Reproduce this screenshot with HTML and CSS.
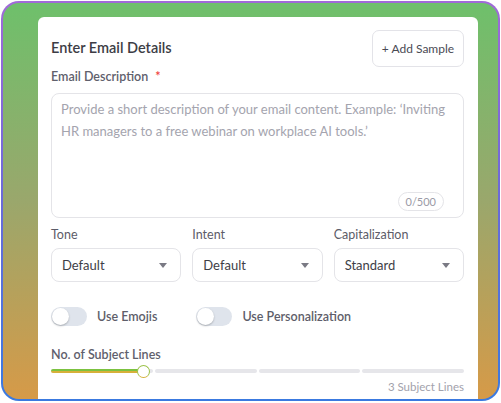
FILE: index.html
```html
<!DOCTYPE html>
<html>
<head>
<meta charset="utf-8">
<link rel="stylesheet" href="styles.css">
</head>
<body>
<div class="frame">
  <div class="card">
    <div class="head">
      <h1 class="title">Enter Email Details</h1>
      <button class="add-btn">+ Add Sample</button>
    </div>
    <div class="label">Email Description <span class="req">*</span></div>
    <div class="textarea">
      <div class="placeholder">Provide a short description of your email content. Example: ‘Inviting HR managers to a free webinar on workplace AI tools.’</div>
      <div class="counter">0/500</div>
    </div>
    <div class="selects">
      <div class="field">
        <div class="label small">Tone</div>
        <div class="select"><span>Default</span><span class="caret"></span></div>
      </div>
      <div class="field">
        <div class="label small">Intent</div>
        <div class="select"><span>Default</span><span class="caret"></span></div>
      </div>
      <div class="field">
        <div class="label small">Capitalization</div>
        <div class="select"><span>Standard</span><span class="caret"></span></div>
      </div>
    </div>
    <div class="toggles">
      <div class="toggle-item"><span class="track"><span class="thumb"></span></span><span class="tlabel">Use Emojis</span></div>
      <div class="toggle-item"><span class="track"><span class="thumb"></span></span><span class="tlabel">Use Personalization</span></div>
    </div>
    <div class="label">No. of Subject Lines</div>
    <div class="slider">
      <div class="seg"></div><div class="seg"></div><div class="seg"></div><div class="seg"></div>
      <div class="fill"></div>
      <div class="knob"></div>
    </div>
    <div class="slider-note">3 Subject Lines</div>
  </div>
</div>
</body>
</html>
```
FILE: styles.css
```css
* { box-sizing: border-box; }
html, body { margin: 0; padding: 0; background: #ffffff; }
body { font-family: "Lato", "Inter", sans-serif; }
.frame {
  margin: 1px 0 0 1px;
  width: 499px;
  height: 400px;
  border: 2px solid transparent;
  border-radius: 18px;
  background:
    linear-gradient(180deg, #6ec06b 0%, #9aa76c 50%, #d69a48 100%) padding-box,
    linear-gradient(180deg, #a06ad8 0%, #6a6ad8 50%, #3a7ae0 100%) border-box;
  padding: 14px 20px 0 35px;
  overflow: hidden;
}
.card {
  background: #ffffff;
  border-radius: 6px 6px 0 0;
  height: 420px;
  padding: 12px 14px 0 13px;
}
.head { display: flex; justify-content: space-between; align-items: flex-start; }
.title {
  margin: 10px 0 0 0;
  font-size: 14.5px;
  font-weight: 600;
  color: #3d3d45;
  line-height: 18px;
}
.add-btn {
  margin: 1px 0 0 0;
  width: 92px;
  height: 37px;
  border: 1px solid #e3e3e8;
  border-radius: 7px;
  background: #fff;
  font-family: inherit;
  font-size: 12px;
  color: #4a4a54;
  padding: 0;
}
.label {
  font-size: 12.5px;
  font-weight: 600;
  color: #60606c;
  line-height: 16px;
  margin-top: 2px;
}
.req { color: #ef3b3b; margin-left: 4px; }
.textarea {
  margin-top: 8px;
  height: 125px;
  border: 1px solid #e4e4e8;
  border-radius: 8px;
  padding: 4px 10px 0 9px;
  display: flex;
  flex-direction: column;
  justify-content: space-between;
}
.placeholder {
  font-size: 13px;
  color: #a4a4ae;
  line-height: 22px;
}
.counter {
  align-self: flex-end;
  margin: 0 9px 6px 0;
  border: 1px solid #e4e4e8;
  border-radius: 10px;
  font-size: 11px;
  color: #9a9aa6;
  padding: 2px 7px;
  line-height: 13px;
}
.selects {
  display: grid;
  grid-template-columns: repeat(3, 1fr);
  gap: 11px;
  margin-top: 9px;
}
.label.small { font-weight: 400; color: #5c5c68; font-size: 12.5px; margin-top: 0; }
.select {
  margin-top: 5px;
  height: 34px;
  border: 1px solid #e4e4e8;
  border-radius: 8px;
  display: flex;
  align-items: center;
  justify-content: space-between;
  padding: 0 13px 0 10px;
  font-size: 13px;
  color: #3e3e46;
}
.caret {
  width: 0; height: 0;
  border-left: 4px solid transparent;
  border-right: 4px solid transparent;
  border-top: 5px solid #7a7a84;
}
.toggles { display: flex; gap: 39px; margin-top: 25px; }
.toggle-item { display: flex; align-items: center; gap: 10px; }
.track {
  position: relative;
  width: 36px; height: 19px;
  border-radius: 10px;
  background: #dfe4ec;
}
.thumb {
  position: absolute;
  left: 1px; top: 1px;
  width: 17px; height: 17px;
  border-radius: 50%;
  background: #fff;
  box-shadow: 0 1px 2px rgba(0,0,0,0.25);
}
.tlabel { font-size: 12.5px; font-weight: 600; color: #5e5e6a; }
.toggles + .label { margin-top: 21px; }
.slider {
  position: relative;
  margin-top: 6px;
  height: 4px;
  display: flex;
  gap: 2px;
}
.seg { flex: 1; background: #e6e6ea; border-radius: 2px; }
.fill {
  position: absolute;
  left: 0; top: 0;
  width: 92px; height: 4px;
  border-radius: 2px;
  background: linear-gradient(180deg, #7cc240 0%, #7cc240 50%, #d7b03a 50%, #d7b03a 100%);
}
.knob {
  position: absolute;
  left: 86px; top: -4px;
  width: 13px; height: 13px;
  border-radius: 50%;
  background: #fff;
  border: 1.5px solid #9cc24a;
  border-bottom-color: #d4b23a;
}
.slider-note {
  text-align: right;
  margin-top: 7px;
  font-size: 11.5px;
  color: #a2a2ac;
}
```
